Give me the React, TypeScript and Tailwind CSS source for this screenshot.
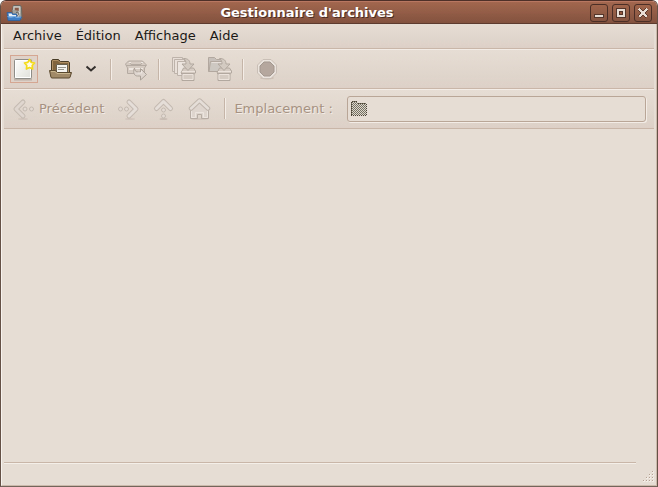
import type { ReactNode } from "react";

function ToolButton({ label, children, active = false, disabled = false }: { label: string; children: ReactNode; active?: boolean; disabled?: boolean }) {
  return (
    <button
      type="button"
      aria-label={label}
      disabled={disabled}
      className={`flex h-7 w-7 items-center justify-center border ${active ? "border-[#d5a692] bg-[#dfd2c8]" : "border-transparent"}`}
    >
      {children}
    </button>
  );
}

function Separator() {
  return <div className="h-[21px] w-0.5 border-r border-l border-r-[#f3ece7] border-l-[#c5b5a8]" />;
}

function WindowButton({ label, children }: { label: string; children: ReactNode }) {
  return (
    <button type="button" aria-label={label} className="flex h-[18px] w-[18px] items-center justify-center rounded-[3px] border border-[#4b2e25] bg-linear-to-b from-[#a0654b] to-[#855440]">
      <svg width="16" height="16" viewBox="0 0 16 16" shapeRendering="crispEdges">{children}</svg>
    </button>
  );
}

const icon = { width: 24, height: 24, viewBox: "0 0 24 24", fill: "none", className: "shrink-0" };

function AppIcon() {
  return (
    <svg width="18" height="18" viewBox="0 0 18 18" fill="none">
      <path d="M6 6.500 7.500 1.500h7l1 2 .5 11-2 1.500H7z" fill="#a3a39d" stroke="#6a655f" />
      <path d="M8 6V3h5.500v4" fill="#8a5a48" stroke="#c9c9c3" strokeWidth="1.400" />
      <path d="M13.500 7.500 11.500 13" stroke="#e2e2dd" strokeWidth="1.800" />
      <path d="M10 8.500c2-1 3 0 2.500 2l-1.500 2" stroke="#5f5b57" />
      <path d="M1 8.500h4.500l1 1.500h4l.5 3.500 4.500-.5-1.500 3.500H2z" fill="#3f7fc5" stroke="#2d5f9e" strokeWidth=".8" />
      <path d="M2.500 9.500h3l1 1.500H10v1.500H3z" fill="#e8f0f6" />
      <path d="M1.500 12.500l3 .8 4-.8 2.500 1 4-.5" stroke="#78b1e8" />
    </svg>
  );
}

function NewIcon() {
  return (
    <svg {...icon}>
      <defs>
        <linearGradient id="paper" x1="0" y1="0" x2="1" y2="1"><stop stopColor="#fff" /><stop offset="1" stopColor="#deded9" /></linearGradient>
      </defs>
      <path d="M2 22.500h18" stroke="#a99f95" strokeOpacity=".6" strokeWidth="2" />
      <rect x="2.500" y="2.500" width="17" height="19" rx="1" fill="url(#paper)" stroke="#8f8d87" />
      <path d="M3.500 20.500v-17h15v17z" stroke="#fff" />
      <path d="m17.500 2.500 1.700 2.900 3.300.6-2.300 2.500.4 3.500-3.100-1.400-3.100 1.400.4-3.500L12.500 6l3.300-.6z" fill="#fffbe6" stroke="#f4dc1c" strokeWidth="1.700" strokeLinejoin="round" />
    </svg>
  );
}

function OpenIcon() {
  return (
    <svg {...icon}>
      <path d="M3.500 19V3.500l1-1h6l2 2h8l1 1V19z" fill="#80653f" stroke="#493c27" />
      <path d="M4.500 15V4l.5-.5h5l2 2h8.500V15" stroke="#ae8f63" />
      <path d="M8.500 7.500h11V17h-11z" fill="#f5f4ef" stroke="#68604f" />
      <path d="M10 10.500h8M10 12.500h6" stroke="#96958e" />
      <path d="M1.500 13.500h6l2 2h14l-1.500 5-1 .5H4l-1-.5z" fill="#a08a68" stroke="#5b492f" strokeLinejoin="round" />
      <path d="M3 14.500h4l2 2h13" stroke="#c9b58e" />
    </svg>
  );
}

function ExtractIcon() {
  return (
    <svg {...icon}>
      <path d="m1.500 7 3-3h14l4 4-2 3v5.500h-17V11z" fill="#d5cbc2" stroke="#b5aba2" strokeLinejoin="round" />
      <path d="M2 8.500h20M5 4.500l2 3h10l1.500-3" stroke="#b5aba2" />
      <path d="M5 5.500h2M17 5.500h2M5 11.500h14M5 12.500h4" stroke="#eee7e1" />
      <path d="M10.500 11c.2 3 1.500 4 4 4h2v-3.500l6 6-6 5.500v-4h-3c-3 0-5-3-3-8z" fill="#ddd5ce" stroke="#aaa198" strokeLinejoin="round" />
      <path d="M17.500 14v2h-4" stroke="#eee7e1" />
    </svg>
  );
}

function AddBox() {
  return (
    <>
      <path d="m10 14 1.500-3h10l2 3v2l-1.500 1v6.500H10V17l-1-1z" fill="#d5cbc2" stroke="#b2a89f" strokeLinejoin="round" />
      <path d="M10 14.500h13M11 17.500h10v5H11z" stroke="#ebe3dc" />
      <path d="M10 16.500h12" stroke="#b2a89f" />
      <path d="M11.500 1.500c4.500 0 6.500 2 6.500 5.500h4l-6 6.500-6-6.500h4c0-2-.5-4-2.500-5.500z" fill="#d3cac2" stroke="#b2a89f" strokeLinejoin="round" />
    </>
  );
}

function AddFilesIcon() {
  return (
    <svg {...icon}>
      <path d="M.500.500h10v14H.500z" fill="#e6ded7" stroke="#bdb3aa" />
      <path d="M2.500 2.500h10v14h-10z" fill="#e8e0d9" stroke="#bdb3aa" />
      <path d="M5.500 4.500h10v14h-10z" fill="#ece5df" stroke="#bdb3aa" />
      <AddBox />
    </svg>
  );
}

function AddFolderIcon() {
  return (
    <svg {...icon}>
      <path d="M.500.500h6l2 2h6v12H.500z" fill="#c7c0ba" stroke="#b2a89f" />
      <path d="M2.500 4.500h13v10H1z" fill="#cec8c2" stroke="#b2a89f" />
      <path d="M3.500 5.500h10.500" stroke="#e7dfd9" />
      <AddBox />
    </svg>
  );
}

function StopIcon() {
  return (
    <svg {...icon}>
      <ellipse cx="11" cy="21" rx="7" ry="1.500" fill="#cabcb1" />
      <path d="M7 2.500h8l5.500 5.500v8L15 21.500H7L1.500 16V8z" fill="#eae2dc" stroke="#c9bfb6" />
      <path d="M8 5h6l4 4v6l-4 4H8l-4-4V9z" fill="#b5a69e" stroke="#a3988f" />
    </svg>
  );
}

function BackIcon() {
  return (
    <svg {...icon}>
      <ellipse cx="11" cy="22" rx="5" ry="1" fill="#d2c6bd" />
      <path d="M11 5 4 12l7 7" stroke="#c4bab1" strokeWidth="5" strokeLinecap="round" strokeLinejoin="round" />
      <path d="M11 5 4 12l7 7" stroke="#ded6cf" strokeWidth="3" strokeLinecap="round" strokeLinejoin="round" />
      <circle cx="13" cy="12" r="2" fill="#e2dad3" stroke="#c4bab1" /><circle cx="19.500" cy="12" r="2" fill="#e2dad3" stroke="#c4bab1" />
    </svg>
  );
}

function ForwardIcon() {
  return (
    <svg {...icon}>
      <ellipse cx="14" cy="22" rx="5" ry="1" fill="#d2c6bd" />
      <path d="m13 5 7 7-7 7" stroke="#c4bab1" strokeWidth="5" strokeLinecap="round" strokeLinejoin="round" />
      <path d="m13 5 7 7-7 7" stroke="#e5ded8" strokeWidth="3" strokeLinecap="round" strokeLinejoin="round" />
      <circle cx="4.500" cy="12" r="2" fill="#e2dad3" stroke="#c4bab1" /><circle cx="10.500" cy="12" r="2" fill="#e2dad3" stroke="#c4bab1" />
    </svg>
  );
}

function UpIcon() {
  return (
    <svg {...icon}>
      <ellipse cx="11.500" cy="22" rx="4" ry="1" fill="#c9bdb4" />
      <path d="m4.500 11.500 7-7 7 7" stroke="#c4bab1" strokeWidth="5" strokeLinecap="round" strokeLinejoin="round" />
      <path d="m4.500 11.500 7-7 7 7" stroke="#e5ded8" strokeWidth="3" strokeLinecap="round" strokeLinejoin="round" />
      <circle cx="11.500" cy="13" r="2" fill="#e2dad3" stroke="#c4bab1" /><circle cx="11.500" cy="19" r="2" fill="#e2dad3" stroke="#c4bab1" />
    </svg>
  );
}

function HomeIcon() {
  return (
    <svg {...icon}>
      <ellipse cx="11.500" cy="22" rx="9" ry="1" fill="#d2c6bd" />
      <path d="M2.500 11v10.500h7v-4h4v4h7V11l-9-7z" fill="#ddd5ce" stroke="#b7ada4" />
      <path d="M3.500 14v6.500h4v-5h8v5h4V14" stroke="#ece5df" />
      <path d="m3 11.500 8.500-8 8.500 8" stroke="#c0b6ad" strokeWidth="4.500" strokeLinecap="round" strokeLinejoin="round" />
      <path d="m3 11.500 8.500-8 8.500 8" stroke="#e5ded8" strokeWidth="2.500" strokeLinecap="round" strokeLinejoin="round" />
    </svg>
  );
}

function FolderIcon() {
  return (
    <svg width="18" height="18" viewBox="0 0 18 18" shapeRendering="crispEdges" className="shrink-0">
      <defs>
        <pattern id="check" width="2" height="2" patternUnits="userSpaceOnUse">
          <path d="M0 0h1v1H0zM1 1h1v1H1z" fill="#777363" />
          <path d="M1 0h1v1H1zM0 1h1v1H0z" fill="#dcd6ce" />
        </pattern>
      </defs>
      <path d="M2 1h5v1h1v1h8v1h1v12H1V2h1z" fill="url(#check)" />
      <path d="M2 1.500h5M8 3.500h8M1 15.500h16M1.500 2v13M16.500 4v12" fill="none" stroke="#4a4335" strokeDasharray="1 1" />
    </svg>
  );
}

const gripDots = [[10, 0], [7, 3], [10, 3], [4, 6], [7, 6], [10, 6], [1, 9], [4, 9], [7, 9], [10, 9]];

export default function App() {
  const bar = "border-b border-b-[#c9b6a8] bg-linear-to-b from-[#e6ddd4] to-[#ddd1c7]";
  const faded = "text-[#a69282] [text-shadow:1px_1px_0_#f3ece6]";
  return (
    <div className="flex min-h-screen flex-col overflow-hidden rounded-t-md border border-t-[#4e3028] border-r-[#655146] border-b-[#74655a] border-l-[#655146] bg-[#e6ddd4] font-['DejaVu_Sans',sans-serif] text-[13px] leading-4 text-[#1b1917]">
      <header className="flex h-[23px] items-center border-t border-b border-t-[#b77760] border-b-[#5d3b2e] bg-linear-to-b from-[#a2674e] to-[#83523f] px-[5px]">
        <AppIcon />
        <h1 className="flex-1 text-center font-bold text-white [text-shadow:1px_1px_0_#4c2d22]">Gestionnaire d'archives</h1>
        <div className="flex gap-1">
          <WindowButton label="Réduire">
            <path d="M3 9h10v4H3z" fill="#55362a" /><path d="M4 10h8v2H4z" fill="#e9ded6" />
          </WindowButton>
          <WindowButton label="Agrandir">
            <path d="M3 3h10v10H3z" fill="#55362a" /><path d="M4 4h8v8H4z" fill="#e9ded6" /><path d="M6 6h4v4H6z" fill="#55362a" /><path d="M7 7h2v2H7z" fill="#93583f" />
          </WindowButton>
          <WindowButton label="Fermer">
            <path d="m4 4 8 8M12 4l-8 8" stroke="#5d3b2e" strokeWidth="4" /><path d="m4 4 8 8M12 4l-8 8" stroke="#e9ded6" strokeWidth="2.400" />
          </WindowButton>
        </div>
      </header>

      <div className="flex flex-1 flex-col border-r border-b border-l border-r-[#cbb9ab] border-b-[#cbb9ab] border-l-[#f8f3ef] px-0.5">
        <nav className={`flex h-[25px] items-end gap-3.5 px-[9px] pb-1 ${bar}`}>
          <button type="button">Archive</button>
          <button type="button">Édition</button>
          <button type="button">Affichage</button>
          <button type="button">Aide</button>
        </nav>

        <div className={`flex h-10 items-center gap-2 border-t border-t-[#f3ece6] px-1.5 ${bar}`}>
          <ToolButton label="Nouveau" active><NewIcon /></ToolButton>
          <ToolButton label="Ouvrir"><OpenIcon /></ToolButton>
          <button type="button" aria-label="Fichiers récents" className="flex h-7 w-5 items-center">
            <svg width="18" height="12" viewBox="0 0 18 12" fill="none"><path d="m4.500 3.500 4.500 4 4.500-4" stroke="#33302d" strokeWidth="2" /></svg>
          </button>
          <div className="mr-0.5"><Separator /></div>
          <ToolButton label="Extraire" disabled><ExtractIcon /></ToolButton>
          <div className="mr-0.5"><Separator /></div>
          <ToolButton label="Ajouter des fichiers" disabled><AddFilesIcon /></ToolButton>
          <ToolButton label="Ajouter un dossier" disabled><AddFolderIcon /></ToolButton>
          <div className="mr-0.5"><Separator /></div>
          <ToolButton label="Arrêter" disabled><StopIcon /></ToolButton>
        </div>

        <div className={`flex h-10 items-center gap-3 border-t border-t-[#f3ece6] px-2 pb-px ${bar}`}>
          <button type="button" disabled className={`flex items-center gap-[3px] ${faded}`}><BackIcon />Précédent</button>
          <button type="button" disabled aria-label="Suivant"><ForwardIcon /></button>
          <button type="button" disabled aria-label="Dossier parent"><UpIcon /></button>
          <button type="button" disabled aria-label="Dossier personnel"><HomeIcon /></button>
          <div className="flex flex-1 items-center gap-2">
            <Separator />
            <label htmlFor="location" className={`mr-1.5 ${faded}`}>Emplacement :</label>
            <div className="flex h-[26px] flex-1 items-center rounded-[3px] border border-[#b9a697] bg-[#e6ddd4] pl-0.5 shadow-[1px_1px_0_#f3ece6]">
              <FolderIcon />
              <input id="location" type="text" disabled className="min-w-0 flex-1 bg-transparent px-1 outline-none" />
            </div>
          </div>
        </div>

        <main className="flex-1" />

        <footer className="flex h-[23px]">
          <div className="flex-1 border-t border-t-[#c9b6a8] shadow-[inset_0_1px_0_#f5efea]" />
          <svg width="18" height="23" viewBox="-6 -9 18 23" shapeRendering="crispEdges" aria-hidden="true">
            {gripDots.map(([x, y]) => (
              <g key={`${x}-${y}`}>
                <rect x={x} y={y} width="2" height="2" fill="#f3ece6" />
                <rect x={x} y={y} width="1" height="1" fill="#b5a294" />
              </g>
            ))}
          </svg>
        </footer>
      </div>
    </div>
  );
}
